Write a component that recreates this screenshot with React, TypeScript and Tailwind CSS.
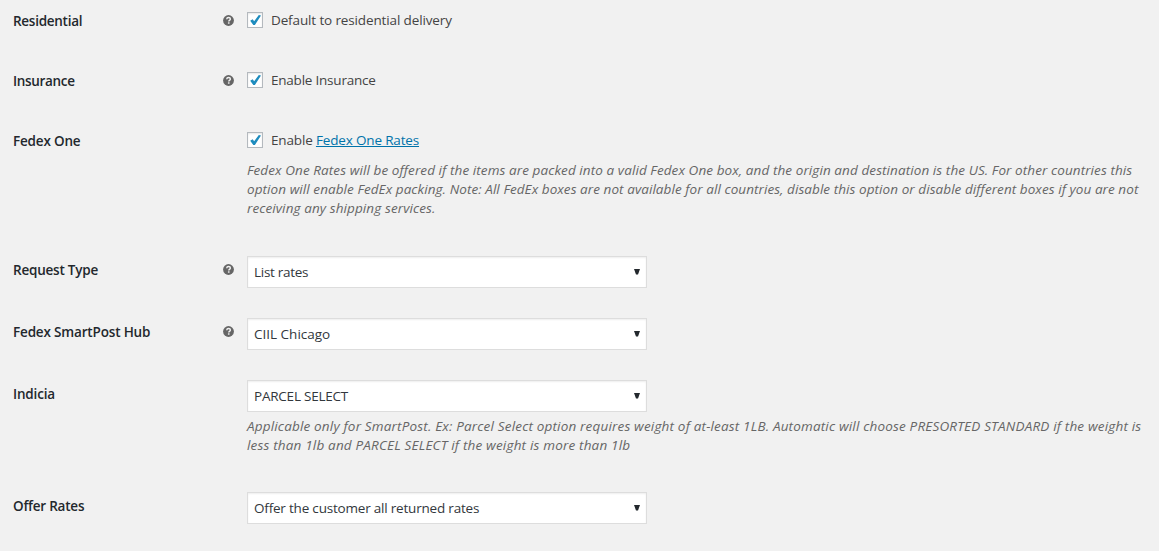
import React from 'react';

const HelpIcon: React.FC = () => (
  <svg viewBox="0 0 22 22" className="w-[11px] h-[11px]" aria-label="Help">
    <circle cx="11" cy="11" r="10.8" fill="#666" />
    <path d="M7.4 8.4C7.6 6.2 9 5 11.1 5c2.2 0 3.7 1.2 3.7 3.1 0 2.6-3.3 2.7-3.3 4.9" fill="none" stroke="#f1f1f1" strokeWidth="2.8" />
    <rect x="9.9" y="14.6" width="3.2" height="2.8" fill="#f1f1f1" />
  </svg>
);

const Row: React.FC<{ label: string; labelClass?: string; help?: boolean; className: string; children: React.ReactNode }> = ({
  label,
  labelClass = 'tracking-[-0.27px]',
  help,
  className,
  children,
}) => (
  <div className={`flex pl-[13px] ${className}`}>
    <div className="w-[210px] pt-[11px]">
      <div className={`text-[13.5px] leading-5 font-semibold text-[#23282d] whitespace-nowrap ${labelClass}`}>{label}</div>
    </div>
    <div className="w-6 pt-[15px]">{help && <HelpIcon />}</div>
    <div className="flex-1">{children}</div>
  </div>
);

const Checkbox: React.FC<{ children: React.ReactNode }> = ({ children }) => (
  <label className="flex items-center gap-2 pt-2.5 h-[30px] text-[13.5px] leading-5 text-[#444] whitespace-nowrap">
    <span className="w-4 h-4 bg-white border border-[#b4b9be] shadow-[inset_0_1px_2px_rgba(0,0,0,0.1)]">
      <svg viewBox="0 0 14 14" className="w-3.5 h-3.5">
        <path d="M2.2 7.7 4.6 6.2 6.2 8.2 10.8 2l2.2.6L6.9 12H5.3z" fill="#1e8cbe" />
      </svg>
    </span>
    {children}
  </label>
);

const Select: React.FC<{ value: string; textClass?: string }> = ({ value, textClass = '' }) => (
  <div className="mt-[7px] w-[400px] h-8 pl-1.5 pr-[6px] flex items-center justify-between bg-white border border-[#ddd] shadow-[inset_0_1px_2px_rgba(0,0,0,0.07)]">
    <span className={`text-[13.5px] leading-5 text-[#32373c] whitespace-nowrap ${textClass}`}>{value}</span>
    <svg viewBox="0 0 6 6" className="w-1.5 h-1.5">
      <path d="M0 0h6L4 5.5H2z" fill="#23282d" />
    </svg>
  </div>
);

const Description: React.FC<{ className: string; lines: [string, string][] }> = ({ className, lines }) => (
  <p className={`text-[13.5px] leading-[19px] italic text-[#666] whitespace-nowrap ${className}`}>
    {lines.map(([text, tracking]) => (
      <span key={text} className={`block w-fit ${tracking}`}>
        {text}
      </span>
    ))}
  </p>
);

export default function App() {
  return (
    <div className="w-full h-[551px] overflow-hidden bg-[#f1f1f1] font-['Open_Sans','Noto_Sans',sans-serif]">
      <Row label="Residential" help className="h-[60px]">
        <Checkbox>
          <span className="tracking-[-0.13px]">Default to residential delivery</span>
        </Checkbox>
      </Row>
      <Row label="Insurance" labelClass="tracking-[-0.33px]" help className="h-[60px]">
        <Checkbox>
          <span className="tracking-[-0.22px]">Enable Insurance</span>
        </Checkbox>
      </Row>
      <Row label="Fedex One" labelClass="tracking-[-0.18px]" className="h-[129px]">
        <Checkbox>
          <span className="tracking-[-0.16px]">
            Enable{' '}
            <a href="#" className="text-[#0073aa] underline">
              Fedex One Rates
            </a>
          </span>
        </Checkbox>
        <Description
          className="mt-[11px]"
          lines={[
            ['Fedex One Rates will be offered if the items are packed into a valid Fedex One box, and the origin and destination is the US. For other countries this', 'tracking-[0.088px]'],
            ['option will enable FedEx packing. Note: All FedEx boxes are not available for all countries, disable this option or disable different boxes if you are not', 'tracking-[0.07px]'],
            ['receiving any shipping services.', 'tracking-[0.1px]'],
          ]}
        />
      </Row>
      <Row label="Request Type" labelClass="tracking-[-0.22px]" help className="h-[62px]">
        <Select value="List rates" textClass="tracking-[-0.28px]" />
      </Row>
      <Row label="Fedex SmartPost Hub" labelClass="tracking-[-0.17px]" help className="h-[62px]">
        <Select value="CIIL Chicago" />
      </Row>
      <Row label="Indicia" labelClass="tracking-[-0.18px]" className="h-[112px]">
        <Select value="PARCEL SELECT" textClass="tracking-[-0.22px]" />
        <Description
          className="mt-[5px]"
          lines={[
            ['Applicable only for SmartPost. Ex: Parcel Select option requires weight of at-least 1LB. Automatic will choose PRESORTED STANDARD if the weight is', 'tracking-[0.175px]'],
            ['less than 1lb and PARCEL SELECT if the weight is more than 1lb', 'tracking-[0.18px]'],
          ]}
        />
      </Row>
      <Row label="Offer Rates" labelClass="tracking-[-0.22px]" className="h-[66px]">
        <Select value="Offer the customer all returned rates" textClass="tracking-[-0.2px]" />
      </Row>
    </div>
  );
}
